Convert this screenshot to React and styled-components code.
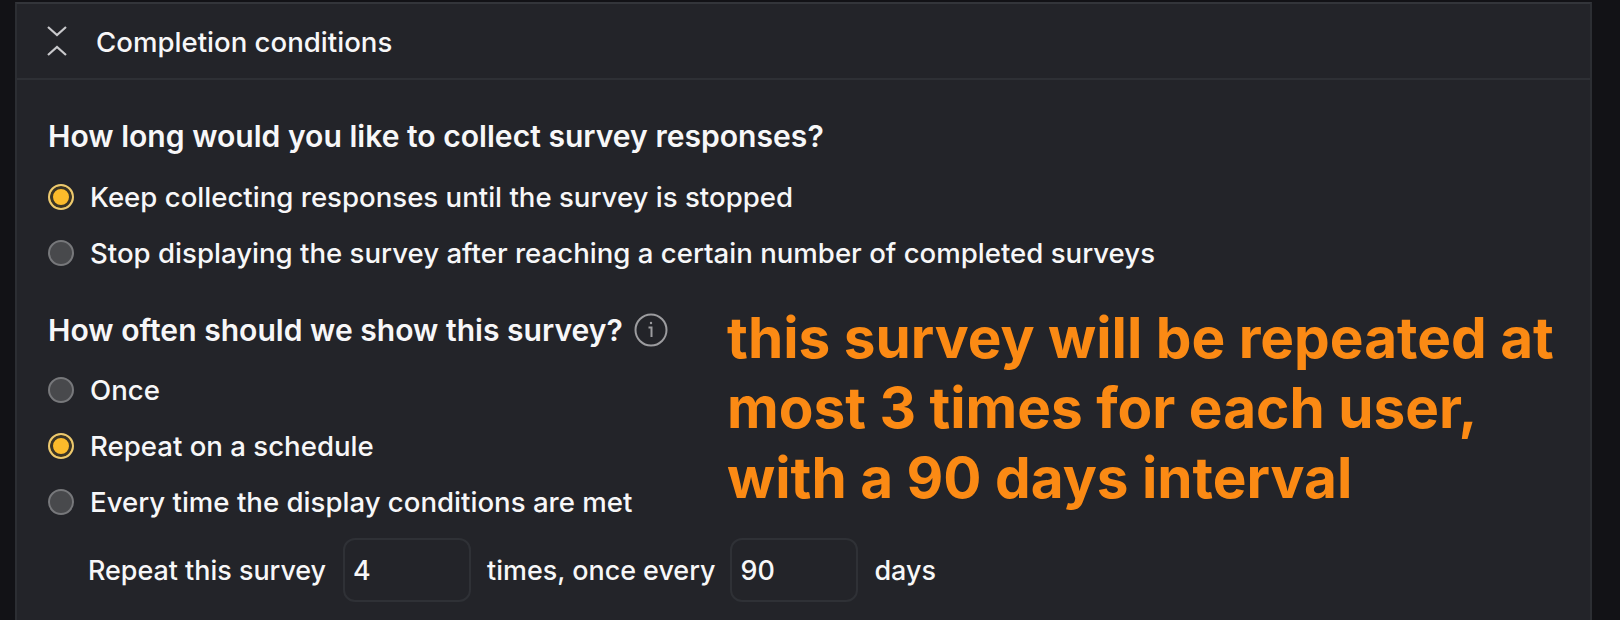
import React from 'react'
import styled, { createGlobalStyle } from 'styled-components'

const GlobalStyle = createGlobalStyle`
    html, body {
        margin: 0;
        padding: 0;
        width: 1620px;
        height: 620px;
        overflow: hidden;
        background: #121216;
    }
    body {
        font-family: Inter, "Liberation Sans", sans-serif;
        color: #f7f7f8;
    }
`;

const App = () => {
    return (
        <>
            <GlobalStyle />
            <StPage>
                <StPanel>
                    <StHeader>
                        <StToggleIcon width="22" height="34" viewBox="0 0 22 34" fill="none">
                            <path d="M2 3 L11 11 L20 3" />
                            <path d="M2 31 L11 23 L20 31" />
                        </StToggleIcon>
                        <StHeaderTitle>Completion conditions</StHeaderTitle>
                    </StHeader>
                    <StBody>
                        <StQuestion>How long would you like to collect survey responses?</StQuestion>
                        <StOptions>
                            <StOption><StRadio $checked /><span>Keep collecting responses until the survey is stopped</span></StOption>
                            <StOption><StRadio /><span>Stop displaying the survey after reaching a certain number of completed surveys</span></StOption>
                        </StOptions>
                        <StSecondQuestion>
                            How often should we show this survey?
                            <StInfoIcon width="34" height="34" viewBox="0 0 34 34" fill="none">
                                <circle cx="17" cy="17" r="15.5" />
                                <path d="M14.5 14.5 H17.5 V24" />
                                <circle className="dot" cx="17" cy="10" r="1.2" />
                            </StInfoIcon>
                        </StSecondQuestion>
                        <StOptions>
                            <StOption><StRadio /><span>Once</span></StOption>
                            <StOption><StRadio $checked /><span>Repeat on a schedule</span></StOption>
                            <StOption><StRadio /><span>Every time the display conditions are met</span></StOption>
                        </StOptions>
                        <StRepeatRow>
                            <span>Repeat this survey</span>
                            <StNumberBox>4</StNumberBox>
                            <span>times, once every</span>
                            <StNumberBox>90</StNumberBox>
                            <span>days</span>
                        </StRepeatRow>
                    </StBody>
                    <StAnnotation>
                        this survey will be repeated at<br />
                        most 3 times for each user,<br />
                        with a 90 days interval
                    </StAnnotation>
                </StPanel>
            </StPage>
        </>
    )
}

const StPage = styled.div`
    width: 1620px;
    height: 620px;
    padding: 2px 28px 0 15px;
    box-sizing: border-box;
    overflow: hidden;
`;
const StPanel = styled.div`
    position: relative;
    height: 660px;
    background: #232429;
    border-top: 2px solid #33353a;
    border-left: 2px solid #2c2e33;
    border-right: 2px solid #2c2e33;
`;
const StHeader = styled.div`
    display: flex;
    align-items: center;
    height: 74px;
    padding-left: 29px;
    border-bottom: 2px solid #2e3035;
`;
const StToggleIcon = styled.svg`
    flex-shrink: 0;
    margin-right: 28px;
    path {
        stroke: #c9c9cc;
        stroke-width: 2.2;
    }
`;
const StHeaderTitle = styled.div`
    font-size: 27.6px;
    font-weight: 500;
    padding-top: 2px;
`;
const StBody = styled.div`
    padding: 38px 0 0 31px;
`;
const StQuestion = styled.div`
    display: flex;
    align-items: center;
    height: 36px;
    font-size: 30.1px;
    font-weight: 600;
`;
const StSecondQuestion = styled(StQuestion)`
    height: 35px;
    margin-top: 44px;
`;
const StInfoIcon = styled.svg`
    margin-left: 11px;
    circle, path {
        stroke: #9c9c9f;
        stroke-width: 2;
    }
    .dot {
        fill: #9c9c9f;
        stroke: none;
    }
`;
const StOptions = styled.div`
    display: flex;
    flex-direction: column;
    gap: 26px;
    margin-top: 28px;
`;
const StOption = styled.div`
    display: flex;
    align-items: center;
    gap: 16px;
    height: 30px;
    font-size: 27.6px;
    font-weight: 500;
`;
const StRadio = styled.span`
    flex-shrink: 0;
    width: 26px;
    height: 26px;
    box-sizing: border-box;
    border-radius: 50%;
    border: 2px solid ${(props) => (props.$checked ? '#ecc96f' : '#77787b')};
    background: ${(props) => (props.$checked ? '#fcbb2b' : '#48494c')};
    box-shadow: ${(props) => (props.$checked ? 'inset 0 0 0 3px #3b3526' : 'none')};
`;
const StRepeatRow = styled.div`
    display: flex;
    align-items: center;
    margin-top: 21px;
    padding-left: 40px;
    font-size: 26.9px;
    font-weight: 500;
    span:nth-child(1) { margin-right: 17px; }
    span:nth-child(3) { margin: 0 15px 0 16px; }
    span:nth-child(5) { margin-left: 16px; }
`;
const StNumberBox = styled.div`
    display: flex;
    align-items: center;
    width: 128px;
    height: 64px;
    box-sizing: border-box;
    padding-left: 8px;
    border: 2px solid #2f3136;
    border-radius: 12px;
`;
const StAnnotation = styled.div`
    position: absolute;
    left: 710px;
    top: 299px;
    font-size: 56.7px;
    line-height: 70.2px;
    font-weight: 700;
    color: #fb8a14;
    white-space: nowrap;
`;

export default App
